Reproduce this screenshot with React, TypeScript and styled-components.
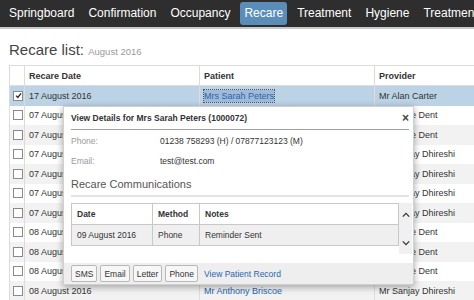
import React from 'react';
import styled, {createGlobalStyle} from "styled-components";

const GlobalStyle = createGlobalStyle`
  html, body {
    margin: 0;
    padding: 0;
    background: #ffffff;
    overflow: hidden;
  }
  body {
    font-family: "Liberation Sans", Arial, sans-serif;
    color: #333;
  }
`

interface RecareRow {
    date: string;
    patient: string;
    provider: string;
    checked?: boolean;
}

const rows: Array<RecareRow> = [
    {date: "17 August 2016", patient: "Mrs Sarah Peters", provider: "Mr Alan Carter", checked: true},
    {date: "07 August 2016", patient: "Mr John Smith", provider: "Mr Jamie Dent"},
    {date: "07 August 2016", patient: "Mrs Jane Doe", provider: "Mr Jamie Dent"},
    {date: "07 August 2016", patient: "Mr Peter Jones", provider: "Mr Sanjay Dhireshi"},
    {date: "07 August 2016", patient: "Miss Emma Brown", provider: "Mr Sanjay Dhireshi"},
    {date: "07 August 2016", patient: "Mr David Green", provider: "Mr Sanjay Dhireshi"},
    {date: "07 August 2016", patient: "Mrs Laura White", provider: "Mr Sanjay Dhireshi"},
    {date: "08 August 2016", patient: "Mr Tom Walker", provider: "Mr Jamie Dent"},
    {date: "08 August 2016", patient: "Mrs Kate Hall", provider: "Mr Jamie Dent"},
    {date: "08 August 2016", patient: "Mr Chris Young", provider: "Mr Jamie Dent"},
    {date: "08 August 2016", patient: "Mr Anthony Briscoe", provider: "Mr Sanjay Dhireshi"},
];

const navItems = ["Springboard", "Confirmation", "Occupancy", "Recare", "Treatment", "Hygiene", "Treatment Plans"];

const CheckIcon = () => (
    <svg width="7" height="7" viewBox="0 0 10 10">
        <path d="M1.5 5.2 L4 7.8 L8.6 2" stroke="#222" strokeWidth="1.8" fill="none"/>
    </svg>
)

const ChevronUp = () => (
    <svg width="8" height="6" viewBox="0 0 10 6">
        <path d="M1 5 L5 1 L9 5" stroke="#333" strokeWidth="1.6" fill="none"/>
    </svg>
)

const ChevronDown = () => (
    <svg width="8" height="6" viewBox="0 0 10 6">
        <path d="M1 1 L5 5 L9 1" stroke="#333" strokeWidth="1.6" fill="none"/>
    </svg>
)

export default function App() {
    return (
        <>
            <GlobalStyle/>
            <NavBar>
                {navItems.map((item) => (
                    <NavItem key={item} active={item === "Recare"}>{item}</NavItem>
                ))}
            </NavBar>
            <Page>
                <PageTitle>Recare list: <small>August 2016</small></PageTitle>
                <TableWrap>
                    <HeaderRow>
                        <Cell/>
                        <Cell>Recare Date</Cell>
                        <Cell>Patient</Cell>
                        <Cell>Provider</Cell>
                    </HeaderRow>
                    {rows.map((row, i) => (
                        <Row key={i} selected={!!row.checked} striped={i % 2 === 0}>
                            <Cell>
                                <CheckBox>{row.checked && <CheckIcon/>}</CheckBox>
                            </Cell>
                            <Cell>{row.date}</Cell>
                            <Cell>
                                <PatientLink focused={!!row.checked}>{row.patient}</PatientLink>
                            </Cell>
                            <Cell>{row.provider}</Cell>
                        </Row>
                    ))}

                    <Popup>
                        <PopupTitle>
                            View Details for Mrs Sarah Peters (1000072)
                            <CloseButton>×</CloseButton>
                        </PopupTitle>
                        <PopupBody>
                            <DetailRow>
                                <DetailLabel>Phone:</DetailLabel>
                                <span>01238 758293 (H) / 07877123123 (M)</span>
                            </DetailRow>
                            <DetailRow>
                                <DetailLabel>Email:</DetailLabel>
                                <span>test@test.com</span>
                            </DetailRow>
                            <SectionTitle>Recare Communications</SectionTitle>
                            <CommsScroll>
                                <CommsTable>
                                    <CommsRow header>
                                        <CommsCell>Date</CommsCell>
                                        <CommsCell>Method</CommsCell>
                                        <CommsCell>Notes</CommsCell>
                                    </CommsRow>
                                    <CommsRow>
                                        <CommsCell>09 August 2016</CommsCell>
                                        <CommsCell>Phone</CommsCell>
                                        <CommsCell>Reminder Sent</CommsCell>
                                    </CommsRow>
                                </CommsTable>
                                <ScrollTrack>
                                    <ChevronUp/>
                                    <ChevronDown/>
                                </ScrollTrack>
                            </CommsScroll>
                        </PopupBody>
                        <PopupFooter>
                            <SmallButton>SMS</SmallButton>
                            <SmallButton>Email</SmallButton>
                            <SmallButton>Letter</SmallButton>
                            <SmallButton>Phone</SmallButton>
                            <FooterLink>View Patient Record</FooterLink>
                        </PopupFooter>
                    </Popup>
                </TableWrap>
            </Page>
        </>
    )
}

const NavBar = styled.div`
  display: flex;
  align-items: center;
  gap: 6px;
  height: 27px;
  padding-left: 5px;
  background-color: #2e2e2e;
  border-bottom: 2px solid #c9c9c9;
  white-space: nowrap;
  overflow: hidden;
`

const NavItem = styled.div<{ active?: boolean }>`
  height: 23px;
  line-height: 23px;
  padding: 0 4px;
  font-size: 12px;
  color: #ffffff;
  border-radius: 3px;
  background-color: ${props => props.active ? "#5b8dba" : "transparent"};
`

const Page = styled.div`
  padding-left: 9px;
`

const PageTitle = styled.h2`
  margin: 12px 0 6px;
  height: 18px;
  line-height: 18px;
  font-size: 15px;
  font-weight: normal;
  color: #444;

  small {
    font-size: 9.5px;
    color: #999;
  }
`

const TableWrap = styled.div`
  position: relative;
  width: 540px;
  border-top: 1px solid #dcdcdc;
  border-left: 1px solid #dcdcdc;
`

const Row = styled.div<{ selected?: boolean; striped?: boolean }>`
  display: grid;
  grid-template-columns: 15px 175px 175px 1fr;
  height: 19.5px;
  font-size: 9px;
  color: #333;
  background-color: ${props => props.selected ? "#bcd2e5" : props.striped ? "#f2f2f2" : "#ffffff"};
`

const HeaderRow = styled(Row)`
  height: 19px;
  font-weight: bold;
  background-color: #ffffff;
  border-bottom: 1px solid #dcdcdc;
`

const Cell = styled.div`
  display: flex;
  align-items: center;
  padding-left: 4px;
  border-right: 1px solid #dcdcdc;
  white-space: nowrap;
  overflow: hidden;

  &:first-child {
    padding-left: 3px;
  }
`

const CheckBox = styled.span`
  display: flex;
  align-items: center;
  justify-content: center;
  width: 8px;
  height: 8px;
  border: 1px solid #8a8a8a;
  background-color: #ffffff;
`

const PatientLink = styled.a<{ focused?: boolean }>`
  color: #2a65b0;
  padding: 1px 0;
  background-color: ${props => props.focused ? "#9fbbd9" : "transparent"};
  outline: ${props => props.focused ? "1px dotted #555" : "none"};
`

const Popup = styled.div`
  position: absolute;
  top: 40px;
  left: 53px;
  width: 349px;
  background-color: #ffffff;
  border: 1px solid #d0d0d0;
  box-shadow: 0 2px 7px rgba(0, 0, 0, 0.35);
  font-size: 8.5px;
  color: #333;
`

const PopupTitle = styled.div`
  position: relative;
  margin: 0 4px 0 7px;
  height: 22px;
  line-height: 22px;
  font-weight: bold;
  font-size: 8.5px;
  border-bottom: 1px solid #a0a0a0;
`

const CloseButton = styled.span`
  position: absolute;
  right: 0;
  top: 0;
  font-size: 12px;
  font-weight: bold;
  color: #444;
`

const PopupBody = styled.div`
  padding: 1px 0 9px 7px;
`

const DetailRow = styled.div`
  display: flex;
  height: 20px;
  align-items: center;
`

const DetailLabel = styled.span`
  width: 89px;
  color: #9a9a9a;
`

const SectionTitle = styled.div`
  margin: 4px 4px 6px 0;
  height: 20px;
  line-height: 18px;
  font-size: 11px;
  color: #555;
  border-bottom: 2px solid #e3e3e3;
`

const CommsScroll = styled.div`
  display: flex;
  height: 51px;
`

const CommsTable = styled.div`
  width: 326px;
  align-self: flex-start;
  border: 1px solid #c8c8c8;
  border-bottom: none;
`

const CommsRow = styled.div<{ header?: boolean }>`
  display: grid;
  grid-template-columns: 81px 47px 1fr;
  height: 20px;
  border-bottom: 1px solid #c8c8c8;
  font-weight: ${props => props.header ? "bold" : "normal"};
  background-color: ${props => props.header ? "#ffffff" : "#efefef"};
`

const CommsCell = styled.div`
  display: flex;
  align-items: center;
  padding-left: 5px;
  border-right: 1px solid #c8c8c8;

  &:last-child {
    border-right: none;
  }
`

const ScrollTrack = styled.div`
  width: 13px;
  display: flex;
  flex-direction: column;
  justify-content: space-between;
  align-items: center;
  padding: 9px 0 8px;
  background-color: #f0f0f0;
`

const PopupFooter = styled.div`
  display: flex;
  align-items: center;
  gap: 3px;
  height: 21px;
  padding-left: 7px;
  background-color: #eeeeee;
`

const SmallButton = styled.button`
  height: 17px;
  padding: 0 3px;
  font-family: "Liberation Sans", Arial, sans-serif;
  font-size: 8.5px;
  color: #333;
  background-color: #f7f7f7;
  border: 1px solid #b8b8b8;
  border-radius: 2px;
`

const FooterLink = styled.a`
  margin-left: 3px;
  color: #2a65b0;
  font-size: 8.5px;
`
